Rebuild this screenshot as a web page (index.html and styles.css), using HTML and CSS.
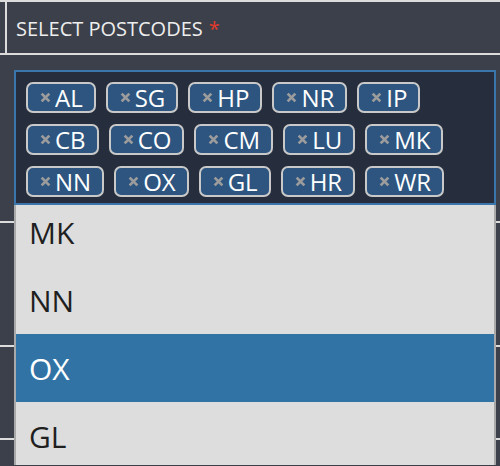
FILE: index.html
```html
<!DOCTYPE html>
<html>
<head>
<meta charset="utf-8">
<link rel="stylesheet" href="styles.css">
</head>
<body>
<div class="page">
  <div class="header">
    <div class="stub"></div>
    <div class="label">SELECT POSTCODES <span class="req">*</span></div>
  </div>
  <div class="rows">
    <div class="row r1"></div>
    <div class="row r2"></div>
    <div class="row r3"></div>
  </div>

  <div class="select">
    <div class="chips">
      <div class="chip-row">
        <span class="chip"><svg class="x" viewBox="0 0 10 10"><path d="M1.5 1.5L8.5 8.5M8.5 1.5L1.5 8.5"/></svg>AL</span>
        <span class="chip"><svg class="x" viewBox="0 0 10 10"><path d="M1.5 1.5L8.5 8.5M8.5 1.5L1.5 8.5"/></svg>SG</span>
        <span class="chip"><svg class="x" viewBox="0 0 10 10"><path d="M1.5 1.5L8.5 8.5M8.5 1.5L1.5 8.5"/></svg>HP</span>
        <span class="chip"><svg class="x" viewBox="0 0 10 10"><path d="M1.5 1.5L8.5 8.5M8.5 1.5L1.5 8.5"/></svg>NR</span>
        <span class="chip"><svg class="x" viewBox="0 0 10 10"><path d="M1.5 1.5L8.5 8.5M8.5 1.5L1.5 8.5"/></svg>IP</span>
      </div>
      <div class="chip-row">
        <span class="chip"><svg class="x" viewBox="0 0 10 10"><path d="M1.5 1.5L8.5 8.5M8.5 1.5L1.5 8.5"/></svg>CB</span>
        <span class="chip"><svg class="x" viewBox="0 0 10 10"><path d="M1.5 1.5L8.5 8.5M8.5 1.5L1.5 8.5"/></svg>CO</span>
        <span class="chip"><svg class="x" viewBox="0 0 10 10"><path d="M1.5 1.5L8.5 8.5M8.5 1.5L1.5 8.5"/></svg>CM</span>
        <span class="chip"><svg class="x" viewBox="0 0 10 10"><path d="M1.5 1.5L8.5 8.5M8.5 1.5L1.5 8.5"/></svg>LU</span>
        <span class="chip"><svg class="x" viewBox="0 0 10 10"><path d="M1.5 1.5L8.5 8.5M8.5 1.5L1.5 8.5"/></svg>MK</span>
      </div>
      <div class="chip-row">
        <span class="chip"><svg class="x" viewBox="0 0 10 10"><path d="M1.5 1.5L8.5 8.5M8.5 1.5L1.5 8.5"/></svg>NN</span>
        <span class="chip"><svg class="x" viewBox="0 0 10 10"><path d="M1.5 1.5L8.5 8.5M8.5 1.5L1.5 8.5"/></svg>OX</span>
        <span class="chip"><svg class="x" viewBox="0 0 10 10"><path d="M1.5 1.5L8.5 8.5M8.5 1.5L1.5 8.5"/></svg>GL</span>
        <span class="chip"><svg class="x" viewBox="0 0 10 10"><path d="M1.5 1.5L8.5 8.5M8.5 1.5L1.5 8.5"/></svg>HR</span>
        <span class="chip"><svg class="x" viewBox="0 0 10 10"><path d="M1.5 1.5L8.5 8.5M8.5 1.5L1.5 8.5"/></svg>WR</span>
      </div>
    </div>
    <div class="list">
      <div class="options">
        <div class="option">MK</div>
        <div class="option">NN</div>
        <div class="option active">OX</div>
        <div class="option">GL</div>
      </div>
    </div>
  </div>
</div>
</body>
</html>
```
FILE: styles.css
```css
html, body {
  margin: 0;
  padding: 0;
}
body {
  background: #3b404a;
  font-family: "Open Sans", "Noto Sans", sans-serif;
  width: 500px;
  height: 466px;
  overflow: hidden;
}
.page {
  position: relative;
  width: 500px;
  height: 466px;
}
.header {
  display: flex;
  height: 51px;
  border-top: 2px solid #dcdcdc;
  border-bottom: 2px solid #dcdcdc;
}
.stub {
  width: 5px;
  border-right: 2px solid #dcdcdc;
}
.label {
  padding-left: 9px;
  display: flex;
  align-items: center;
  gap: 6px;
  color: #eeeeee;
  font-size: 20px;
  padding-top: 1px;
}
.req {
  color: #e23a2e;
}
.rows .row {
  border-bottom: 2px solid #dcdcdc;
}
.r1 { height: 166px; }
.r2 { height: 122px; }
.r3 { height: 91px; }

.select {
  position: absolute;
  left: 14px;
  top: 70px;
  width: 482px;
}
.chips {
  background: #262e3d;
  border: 2px solid #3a76ab;
  padding: 10px 10px 6px 10px;
  display: flex;
  flex-direction: column;
  gap: 11px;
}
.chip-row {
  display: flex;
  gap: 10px;
}
.chip {
  display: inline-flex;
  align-items: center;
  height: 27px;
  padding: 0 11px 0 12px;
  border: 2px solid #c9c9c9;
  border-radius: 7px;
  background: #2d5580;
  color: #ffffff;
  font-size: 24px;
  line-height: 1;
}
.x {
  width: 11px;
  height: 11px;
  margin-right: 4px;
  flex: none;
}
.x path {
  stroke: #9c9c9c;
  stroke-width: 2.5;
  fill: none;
}
.list {
  height: 260px;
  overflow: hidden;
  background: #dddddd;
  border-left: 2px solid #a9a9a9;
  border-right: 2px solid #a9a9a9;
}
.options {
  margin-top: -7px;
}
.option {
  height: 68px;
  display: flex;
  align-items: center;
  padding-left: 13px;
  font-size: 30px;
  color: #1f1f1f;
}
.option.active {
  background: #3273a6;
  color: #ffffff;
}
```
